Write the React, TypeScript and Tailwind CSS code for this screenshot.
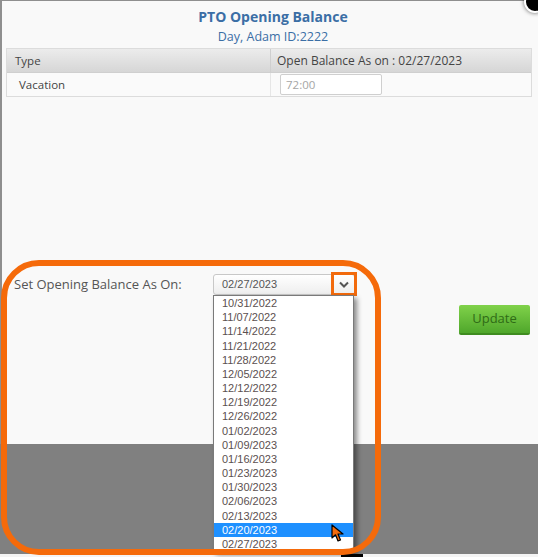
import type { ReactNode } from 'react'

const dates = [
  '10/31/2022', '11/07/2022', '11/14/2022', '11/21/2022', '11/28/2022', '12/05/2022',
  '12/12/2022', '12/19/2022', '12/26/2022', '01/02/2023', '01/09/2023', '01/16/2023',
  '01/23/2023', '01/30/2023', '02/06/2023', '02/13/2023', '02/20/2023', '02/27/2023',
]

function Cell({ children, className = '' }: { children: ReactNode; className?: string }) {
  return <div className={`flex items-center ${className}`}>{children}</div>
}

export default function App() {
  return (
    <div className="relative w-[538px] h-[557px] overflow-hidden bg-[#f4f4f4] font-['Open_Sans',sans-serif]">
      {/* modal body */}
      <div className="h-[444px] bg-[#f9f9f9] border-l-2 border-t border-[#8f8f8f] pt-[6px]">
        <div className="text-center text-[14px] font-bold leading-[20px] text-[#3b6ea5] pl-[6px]">PTO Opening Balance</div>
        <div className="text-center text-[12.5px] leading-[20px] text-[#3b6ea5] pl-[6px]">Day, Adam ID:2222</div>

        <div className="ml-[4px] w-[526px] mt-[1px] border border-[#dcdcdc] text-[11.5px] text-[#444]">
          <div className="grid grid-cols-[264px_1fr] h-[24px] bg-gradient-to-b from-[#ececec] to-[#d6d6d6] border-b border-[#cfcfcf]">
            <Cell className="pl-[8px] border-r border-[#cfcfcf]">Type</Cell>
            <Cell className="pl-[6px] text-[12px]">Open Balance As on : 02/27/2023</Cell>
          </div>
          <div className="grid grid-cols-[264px_1fr] h-[23px] bg-[#fafafa]">
            <Cell className="pl-[12px] border-r border-[#e6e6e6]">Vacation</Cell>
            <Cell className="pl-[9px]">
              <div className="w-[102px] h-[21px] border border-[#cfcfcf] rounded-[2px] bg-white flex items-center pl-[5px] text-[#a5a5a5]">72:00</div>
            </Cell>
          </div>
        </div>

        <div className="flex mt-[177px] ml-[12px]">
          <div className="text-[13px] text-[#555] leading-[20px] w-[199px]">Set Opening Balance As On:</div>
          <div className="w-[142px] h-[21px] border border-[#c8c8c8] rounded-[3px] bg-gradient-to-b from-white to-[#eeeeee] flex items-center pl-[8px] font-['Liberation_Sans',sans-serif] text-[11px] text-[#555]">
            02/27/2023
          </div>
          <div className="ml-auto mr-[8px] mt-[31px]">
            <button className="w-[71px] h-[30px] rounded-[2px] bg-gradient-to-b from-[#80d24a] to-[#4fa72b] border-b-2 border-[#3f8c20] text-[13px] text-[#2f6b16]">
              Update
            </button>
          </div>
        </div>
      </div>

      {/* page mask */}
      <div className="h-[110px] bg-[#808080]" />

      {/* close button */}
      <div className="absolute left-[524px] top-[-9px] w-[22px] h-[22px] rounded-full bg-black border-2 border-white shadow-[0_0_4px_rgba(0,0,0,0.6)]" />

      {/* chevron on select */}
      <div className="absolute left-[331px] top-[272px] w-[26px] h-[24px] border-[3px] border-[#f26a0c] flex items-center justify-center">
        <svg width="10" height="7" viewBox="0 0 10 7">
          <path d="M1 1.5 L5 5.5 L9 1.5" fill="none" stroke="#555" strokeWidth="2" />
        </svg>
      </div>

      {/* open dropdown list */}
      <div className="absolute left-[213px] top-[295px] w-[141px] bg-white border border-[#7a7a7a] shadow-[3px_3px_5px_rgba(0,0,0,0.45)] font-['Liberation_Sans',sans-serif] text-[11px]">
        {dates.map(d => (
          <div
            key={d}
            className={`h-[14.18px] leading-[14.18px] pl-[8px] ${d === '02/20/2023' ? 'bg-[#1e90ff] text-white' : 'text-[#5b5050]'}`}
          >
            {d}
          </div>
        ))}
      </div>

      <div className="absolute left-[341px] top-[554px] w-[22px] h-[3px] bg-black" />

      {/* mouse cursor */}
      <svg className="absolute left-[331px] top-[524px]" width="14" height="19" viewBox="0 0 14 19">
        <path d="M1 1 L1 14 L4.5 10.8 L7 17 L9.5 16 L7 10 L12 10 Z" fill="#f26a0c" stroke="#000" strokeWidth="1.2" strokeLinejoin="round" />
      </svg>

      {/* orange highlight ring */}
      <div className="absolute left-[1px] top-[260px] w-[380px] h-[295px] rounded-[38px] border-[6px] border-[#f56a0a] pointer-events-none" />
    </div>
  )
}
